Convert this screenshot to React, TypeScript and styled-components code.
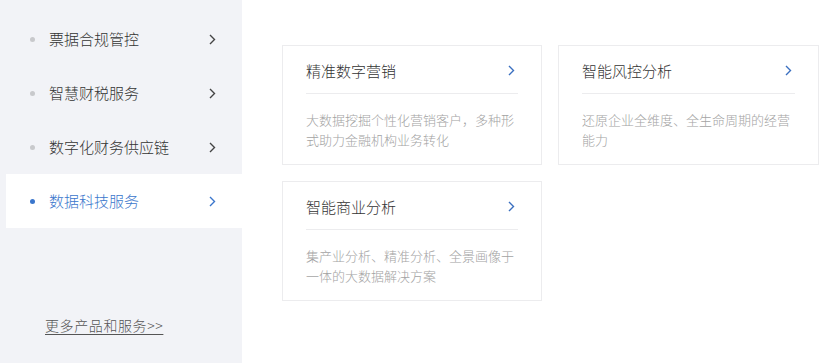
import React from "react";
import styled, { createGlobalStyle } from "styled-components";

const GlobalStyle = createGlobalStyle`
  html, body { margin: 0; padding: 0; background: #ffffff; }
  body {
    font-family: "Microsoft YaHei", "Noto Sans CJK SC", "Noto Sans", sans-serif;
    font-weight: 300;
    -webkit-font-smoothing: antialiased;
  }
  * { box-sizing: border-box; }
`;

const Page = styled.div`
  display: flex;
  width: 828px;
  height: 363px;
  background: #ffffff;
`;

const Sidebar = styled.nav`
  width: 242px;
  flex: none;
  background: #f2f3f7;
  display: flex;
  flex-direction: column;
  padding: 12px 0 0 6px;
`;

const MenuList = styled.ul`
  list-style: none;
  margin: 0;
  padding: 0;
  display: flex;
  flex-direction: column;
`;

const MenuItem = styled.li<{ $active?: boolean }>`
  height: 54px;
  display: flex;
  align-items: center;
  padding: 0 0 0 24px;
  background: ${(p) => (p.$active ? "#ffffff" : "transparent")};
  color: ${(p) => (p.$active ? "#3a76cc" : "#333333")};
  font-size: 15px;
  cursor: pointer;
`;

const Dot = styled.span<{ $active?: boolean }>`
  width: 5px;
  height: 5px;
  border-radius: 50%;
  background: ${(p) => (p.$active ? "#3a76cc" : "#c8c9cc")};
  margin-right: 14px;
  flex: none;
`;

const MenuLabel = styled.span`
  flex: 1;
  line-height: 20px;
`;

const ChevronSvg = styled.svg<{ $gap?: number }>`
  flex: none;
  display: block;
  margin-right: ${(p) => p.$gap ?? 0}px;
`;

const MoreLink = styled.a`
  margin: auto 0 28px 39px;
  font-size: 14px;
  color: #555555;
  text-decoration: underline;
  text-underline-offset: 3px;
  letter-spacing: 0.6px;
  line-height: 20px;
  cursor: pointer;
`;

const Content = styled.main`
  flex: 1;
  padding: 45px 0 0 40px;
`;

const Grid = styled.div`
  display: grid;
  grid-template-columns: 260px 261px;
  grid-auto-rows: 120px;
  column-gap: 16px;
  row-gap: 16px;
`;

const Card = styled.div`
  border: 1px solid #ececee;
  background: #ffffff;
  padding: 0 23px;
  display: flex;
  flex-direction: column;
`;

const CardHead = styled.div`
  height: 48px;
  display: flex;
  align-items: center;
  justify-content: space-between;
  border-bottom: 1px solid #ececee;
  padding: 2px 3px 0 0;
`;

const CardTitle = styled.span`
  font-size: 15px;
  color: #333333;
  line-height: 22px;
`;

const CardDesc = styled.p`
  margin: 16px 0 0;
  font-size: 13px;
  line-height: 20px;
  color: #a3a3a3;
`;

const Chevron: React.FC<{ color: string; gap?: number }> = ({ color, gap }) => (
  <ChevronSvg $gap={gap} width={7} height={11} viewBox="0 0 7 11">
    <path d="M1 1 L5.5 5.5 L1 10" fill="none" stroke={color} strokeWidth="1.4" />
  </ChevronSvg>
);

const menu = [
  { label: "票据合规管控" },
  { label: "智慧财税服务" },
  { label: "数字化财务供应链" },
  { label: "数据科技服务", active: true },
];

const cards = [
  { title: "精准数字营销", desc: "大数据挖掘个性化营销客户，多种形式助力金融机构业务转化" },
  { title: "智能风控分析", desc: "还原企业全维度、全生命周期的经营能力" },
  { title: "智能商业分析", desc: "集产业分析、精准分析、全景画像于一体的大数据解决方案" },
];

export default function App() {
  return (
    <>
      <GlobalStyle />
      <Page>
        <Sidebar>
          <MenuList>
            {menu.map((m) => (
              <MenuItem key={m.label} $active={m.active}>
                <Dot $active={m.active} />
                <MenuLabel>{m.label}</MenuLabel>
                <Chevron color={m.active ? "#3a76cc" : "#444444"} gap={26} />
              </MenuItem>
            ))}
          </MenuList>
          <MoreLink>更多产品和服务&gt;&gt;</MoreLink>
        </Sidebar>
        <Content>
          <Grid>
            {cards.map((c) => (
              <Card key={c.title}>
                <CardHead>
                  <CardTitle>{c.title}</CardTitle>
                  <Chevron color="#3a6fc0" />
                </CardHead>
                <CardDesc>{c.desc}</CardDesc>
              </Card>
            ))}
          </Grid>
        </Content>
      </Page>
    </>
  );
}
